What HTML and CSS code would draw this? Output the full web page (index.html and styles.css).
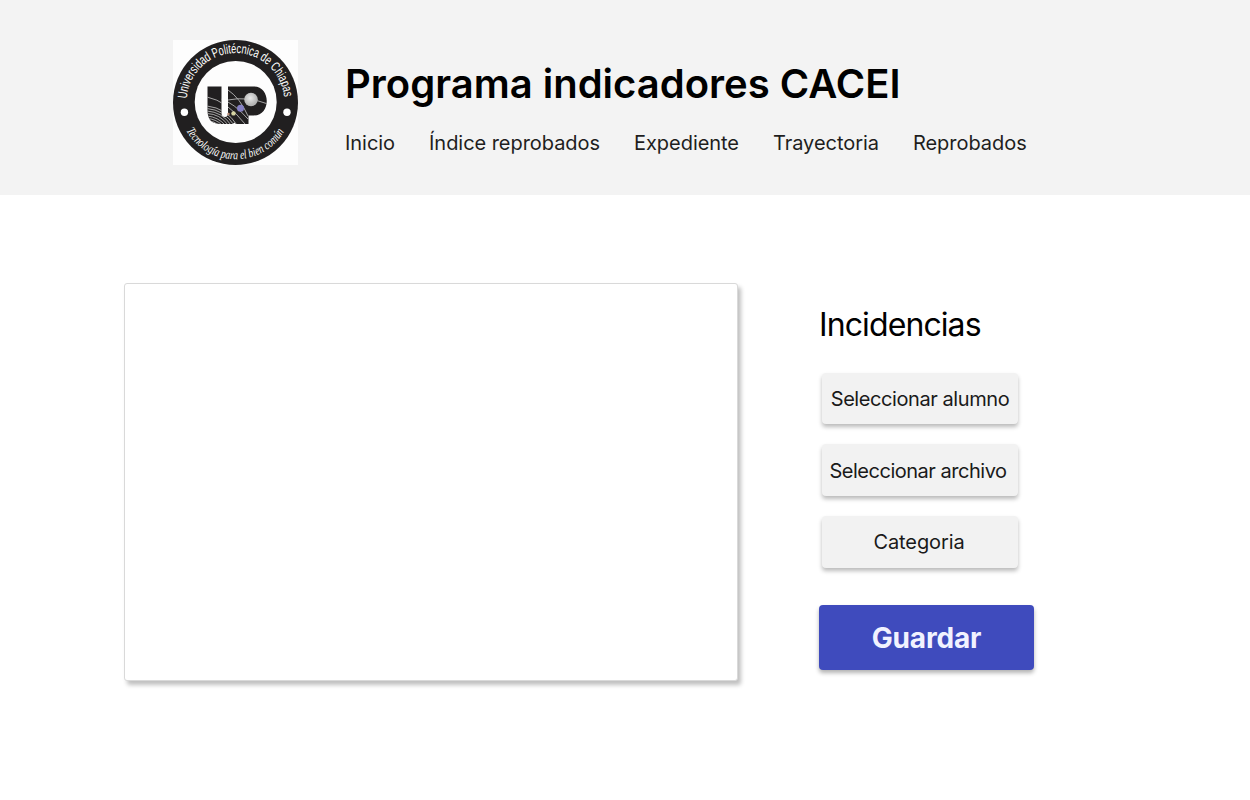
FILE: index.html
```
<!DOCTYPE html>
<html lang="es">
<head>
<meta charset="utf-8">
<title>Programa indicadores CACEI</title>
<link rel="stylesheet" href="styles.css">
</head>
<body>
<header class="header">
  <svg class="logo" viewBox="0 0 125 125" role="img" aria-label="Universidad Politécnica de Chiapas">
    <defs>
      <path id="arc-top" d="M13.8 58.8A48.8 48.8 0 0 1 111.2 58.8"/>
      <path id="arc-bottom" d="M13.2 90.5A56.6 56.6 0 0 0 111.8 90.5"/>
      <clipPath id="mark"><path d="M34.5 46.5H48.5V73Q48.5 77 52 77Q55 77 55 73V46.5H81C98 46.5 98 75.5 81 75.5H75.5V84H63L61.500 82.500L59.500 84H48C38 84 34.5 79 34.5 70Z"/></clipPath>
      <radialGradient id="moon" cx="45%" cy="40%"><stop offset="0" stop-color="#e8e8e8"/><stop offset="1" stop-color="#b4b4b4"/></radialGradient>
    </defs>
    <rect width="125" height="125" fill="#fdfdfd"/>
    <circle cx="62.5" cy="62.5" r="62.5" fill="#211f20"/>
    <circle cx="62.7" cy="62" r="41" fill="#fdfdfd"/>
    <circle cx="11.4" cy="72.2" r="3.7" fill="#fff"/>
    <circle cx="114" cy="72.2" r="3.7" fill="#fff"/>
    <text class="ring-name"><textPath href="#arc-top" textLength="145" lengthAdjust="spacingAndGlyphs">Universidad Politécnica de Chiapas</textPath></text>
    <text class="ring-motto"><textPath href="#arc-bottom" textLength="118" lengthAdjust="spacingAndGlyphs">Tecnología para el bien común</textPath></text>
    <g clip-path="url(#mark)">
      <rect x="34" y="46" width="62" height="39" fill="#211f20"/>
      <g fill="none" stroke="#c9c9c9" stroke-width=".8">
        <path d="M34 57Q54 61 72 84M48 59Q61 63 75 79M55 50Q67 58 75 76M55 60Q74 56 95 64"/>
        <path d="M34 66Q53 68 64 85M34 68.5Q51 70 61 85M34 71Q49 72 58 85M34 73.5Q47 74 55 85M34 76Q45 77 52 85M34 78.5Q43 79 49 85M34 81Q41 81 46 85"/>
      </g>
    </g>
    <circle cx="78" cy="59.5" r="6.8" fill="url(#moon)"/>
    <circle cx="67.5" cy="68.3" r="3.5" fill="#8580c4"/>
    <circle cx="60.5" cy="73.4" r="2.2" fill="#d6d5a4"/>
    <circle cx="55.5" cy="74" r="1.2" fill="#b98972"/>
  </svg>
  <div class="heading">
    <h1 class="title">Programa indicadores CACEI</h1>
    <nav class="nav">
      <a>Inicio</a><a>Índice reprobados</a><a>Expediente</a><a>Trayectoria</a><a>Reprobados</a>
    </nav>
  </div>
</header>
<main class="main">
  <section class="preview"></section>
  <section class="panel">
    <h2 class="panel-title">Incidencias</h2>
    <button class="option student">Seleccionar alumno</button>
    <button class="option file">Seleccionar archivo</button>
    <button class="option category">Categoria</button>
    <button class="save">Guardar</button>
  </section>
</main>
</body>
</html>
```
FILE: styles.css
```
* { box-sizing: border-box; }
body { margin: 0; height: 800px; background: #fff; font-family: Inter, sans-serif; overflow: hidden; }
.header { height: 195px; padding: 40px 0 0 173px; background: #f3f3f3; display: flex; gap: 47px; }
.logo { width: 125px; height: 125px; flex: none; }
.ring-name { font: 13.5px "Liberation Sans", sans-serif; fill: #fff; }
.ring-motto { font: italic 12.5px "Liberation Serif", serif; fill: #fff; }
.heading { padding-top: 19px; }
.title { margin: 0; font-size: 40px; line-height: 50px; font-weight: 600; color: #000; white-space: nowrap; }
.nav { display: flex; gap: 34px; margin-top: 22px; font-size: 20px; line-height: 24px; letter-spacing: -.045px; color: #1e1e1e; white-space: nowrap; }
.main { display: flex; align-items: flex-start; padding: 88px 0 0 124px; }
.preview { width: 614px; height: 398px; border: 1px solid #d9d9d9; border-radius: 3px; background: #fff; box-shadow: 3px 4px 4px rgba(0,0,0,.25); }
.panel { width: 215px; margin-left: 81px; padding-top: 22px; display: flex; flex-direction: column; }
.panel-title { margin: 0 0 28px; font-size: 32px; line-height: 40px; font-weight: 400; letter-spacing: -.9px; color: #000; }
.option { width: 196px; height: 52px; margin: 0 0 20px 3px; padding: 0; border: 0; border-radius: 4px; background: #f2f2f2; color: #1a1a1a; font: 400 20px/52px Inter, sans-serif; letter-spacing: -.42px; white-space: nowrap; box-shadow: 0 3px 4px rgba(0,0,0,.27); }
.student { height: 51px; }
.file { padding: 2px 4px 0 0; line-height: 50px; letter-spacing: -.48px; }
.category { padding-right: 2px; letter-spacing: -.1px; }
.save { width: 215px; height: 65px; margin-top: 17px; padding: 2px 0 0; border: 0; border-radius: 4px; background: #3f4bbd; color: #f1f2ff; font: 700 28px/63px Inter, sans-serif; letter-spacing: -.15px; box-shadow: 0 3px 4px rgba(0,0,0,.3); }
```
